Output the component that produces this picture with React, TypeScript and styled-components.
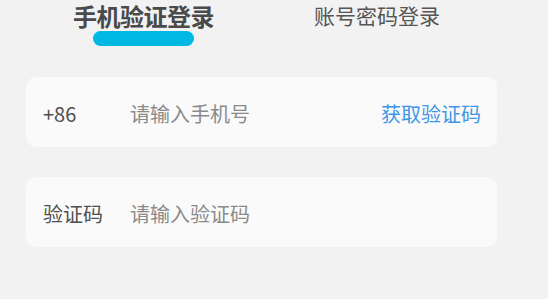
import React from "react";
import styled, { createGlobalStyle } from "styled-components";

const Global = createGlobalStyle`
  html, body { margin: 0; padding: 0; background: #f2f2f2; }
  body { font-family: "Noto Sans CJK SC", "Noto Sans", sans-serif; }
`;

const Page = styled.div`
  width: 548px;
  height: 299px;
  background: #f2f2f2;
  overflow: hidden;
`;

const Tabs = styled.div`
  display: flex;
  padding-left: 73px;
  gap: 100px;
  align-items: flex-start;
`;

const Tab = styled.div`
  display: flex;
  flex-direction: column;
  align-items: center;
`;

const TabLabel = styled.span<{ $active?: boolean }>`
  display: block;
  font-size: ${(p) => (p.$active ? "24px" : "21px")};
  font-weight: ${(p) => (p.$active ? 700 : 400)};
  color: ${(p) => (p.$active ? "#4a4a4a" : "#555555")};
  line-height: ${(p) => (p.$active ? "31px" : "30px")};
  letter-spacing: ${(p) => (p.$active ? "-0.5px" : "0")};
  white-space: nowrap;
`;

const Indicator = styled.div`
  width: 101px;
  height: 15px;
  border-radius: 8px;
  background: #00b9e3;
`;

const Form = styled.div`
  display: flex;
  flex-direction: column;
  gap: 30px;
  padding: 31px 51px 0 26px;
`;

const Card = styled.div`
  height: 70px;
  background: #fafafa;
  border-radius: 10px;
  display: flex;
  align-items: center;
  padding: 0 16px 0 17px;
`;

const Label = styled.div`
  width: 87px;
  font-size: 20px;
  color: #4f4f4f;
  margin-top: 2px;
`;

const Placeholder = styled.div`
  flex: 1;
  font-size: 20px;
  color: #8a8a8a;
  margin-top: 2px;
`;

const Action = styled.div`
  font-size: 20px;
  color: #3d96e6;
  margin-top: 2px;
`;

export default function App() {
  return (
    <Page>
      <Global />
      <Tabs>
        <Tab>
          <TabLabel $active>手机验证登录</TabLabel>
          <Indicator />
        </Tab>
        <Tab>
          <TabLabel>账号密码登录</TabLabel>
        </Tab>
      </Tabs>
      <Form>
        <Card>
          <Label>+86</Label>
          <Placeholder>请输入手机号</Placeholder>
          <Action>获取验证码</Action>
        </Card>
        <Card>
          <Label>验证码</Label>
          <Placeholder>请输入验证码</Placeholder>
        </Card>
      </Form>
    </Page>
  );
}
